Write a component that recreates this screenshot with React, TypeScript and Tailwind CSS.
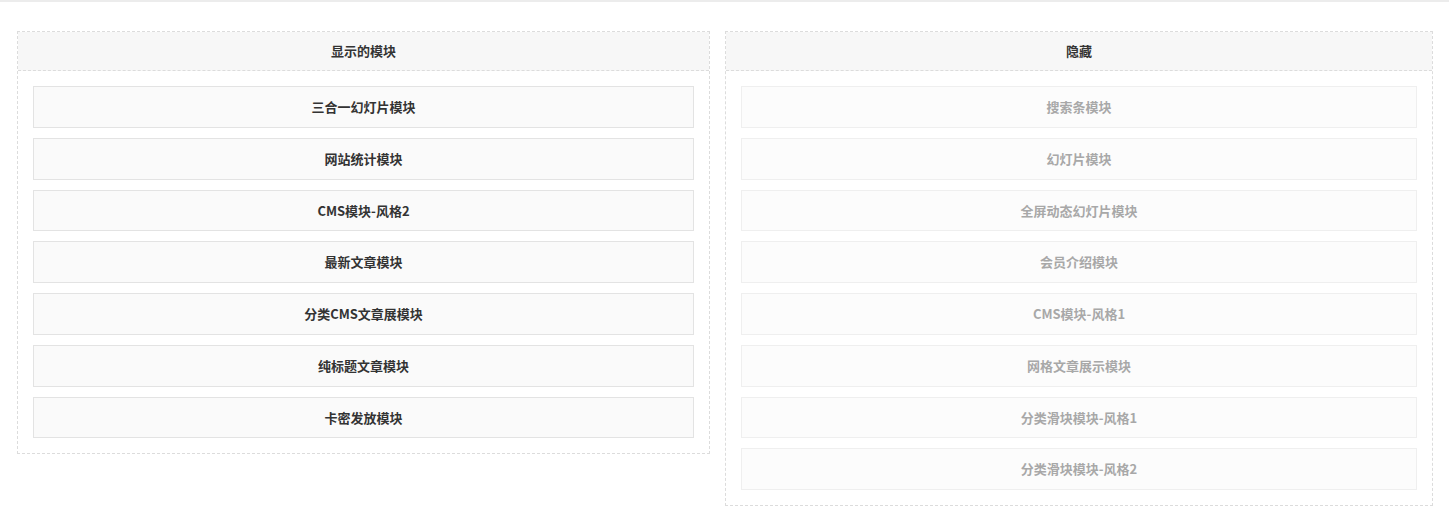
const shown = [
  '三合一幻灯片模块',
  '网站统计模块',
  'CMS模块-风格2',
  '最新文章模块',
  '分类CMS文章展模块',
  '纯标题文章模块',
  '卡密发放模块',
];

const hidden = [
  '搜索条模块',
  '幻灯片模块',
  '全屏动态幻灯片模块',
  '会员介绍模块',
  'CMS模块-风格1',
  '网格文章展示模块',
  '分类滑块模块-风格1',
  '分类滑块模块-风格2',
];

const font = { fontFamily: '"Microsoft YaHei", "Noto Sans CJK SC", "Liberation Sans", sans-serif' };

export default function App() {
  return (
    <div className="min-h-[509px] bg-white border-t-2 border-[#ececec]" style={font}>
      <div className="flex items-start gap-[15px] pl-[17px] pt-[29px]">
        {/* Visible */}
        <div className="w-[693px] border border-dashed border-[#dcdcdc]">
          <div className="h-[39px] flex items-center justify-center bg-[#f7f7f7] border-b border-dashed border-[#dcdcdc] text-[13px] font-bold text-[#333]">
            显示的模块
          </div>
          <div className="flex flex-col gap-[10px] p-[15px]">
            {shown.map((name) => (
              <div
                key={name}
                className="h-[41.75px] flex items-center justify-center bg-[#fafafa] border border-[#e3e3e3] text-[13px] font-bold text-[#333]"
              >
                {name}
              </div>
            ))}
          </div>
        </div>

        {/* Hidden */}
        <div className="w-[708px] border border-dashed border-[#dcdcdc]">
          <div className="h-[39px] flex items-center justify-center bg-[#f7f7f7] border-b border-dashed border-[#dcdcdc] text-[13px] font-bold text-[#333]">
            隐藏
          </div>
          <div className="flex flex-col gap-[10px] p-[15px]">
            {hidden.map((name) => (
              <div
                key={name}
                className="h-[41.75px] flex items-center justify-center bg-[#fcfcfc] border border-[#efefef] text-[13px] font-bold text-[#a8a8a8]"
              >
                {name}
              </div>
            ))}
          </div>
        </div>
      </div>
    </div>
  );
}
